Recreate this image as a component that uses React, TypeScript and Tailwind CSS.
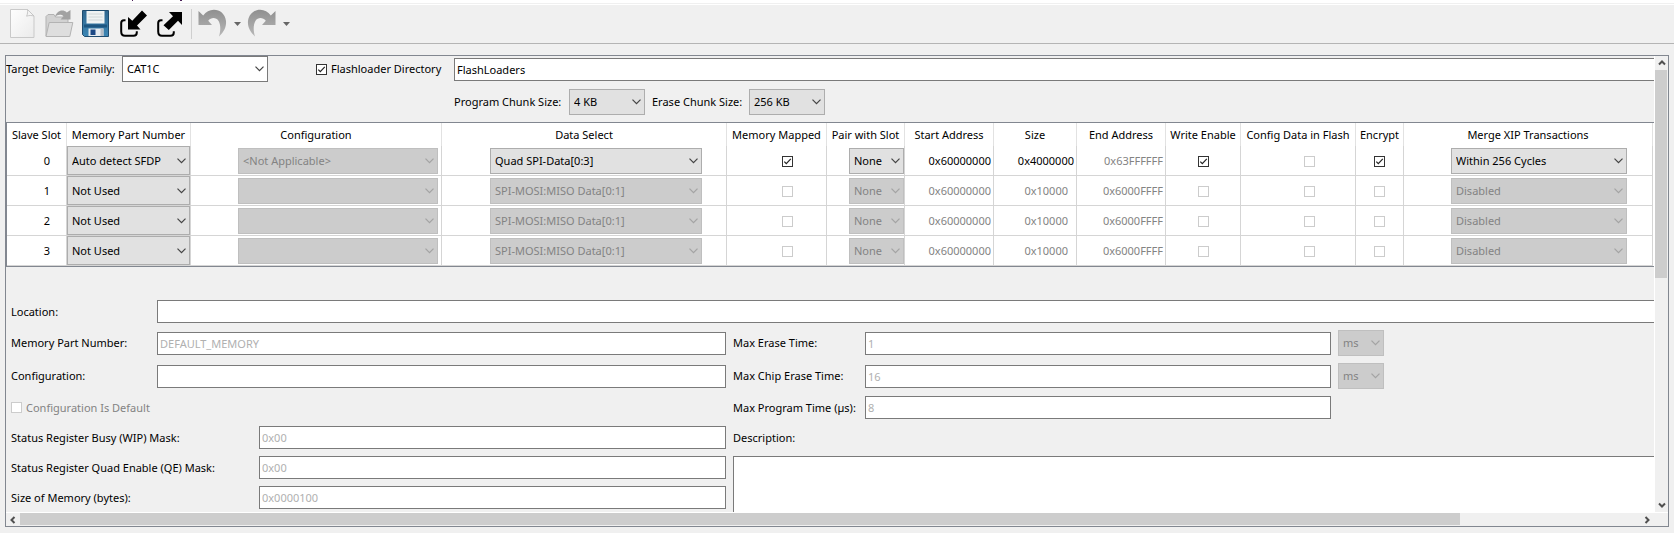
import type { ReactNode } from "react";

type SelectProps = {
  value: string;
  options?: string[];
  label?: string;
  id?: string;
  disabled?: boolean;
  tone?: "button" | "field";
  className?: string;
};

function Select({ value, options = [], label, id, disabled, tone = "button", className = "" }: SelectProps) {
  const look = disabled
    ? "border-[#bfbfbf] bg-[#cccccc] text-[#838383]"
    : tone === "field"
      ? "border-[#7a7a7a] bg-white text-black"
      : "border-[#adadad] bg-[#e1e1e1] text-black";
  return (
    <span className={`relative block ${className}`}>
      <select
        id={id}
        aria-label={label}
        disabled={disabled}
        defaultValue={value}
        className={`block h-full w-full appearance-none border pl-1 pr-4 opacity-100 outline-none ${look}`}
      >
        {[value, ...options].map((o) => (
          <option key={o}>{o}</option>
        ))}
      </select>
      <svg
        viewBox="0 0 9 6"
        className={`pointer-events-none absolute inset-y-0 right-1 my-auto h-[6px] w-[9px] ${disabled ? "text-[#a3a3a3]" : "text-[#444]"}`}
        fill="none"
        stroke="currentColor"
        strokeWidth="1.2"
      >
        <path d="M0.5 0.7 4.5 4.7 8.5 0.7" />
      </svg>
    </span>
  );
}

function Check({ on, disabled, label, id }: { on?: boolean; disabled?: boolean; label?: string; id?: string }) {
  return (
    <span className="relative inline-block size-[11px] shrink-0 align-middle">
      <input
        type="checkbox"
        id={id}
        aria-label={label}
        disabled={disabled}
        defaultChecked={on}
        className={`peer block size-full appearance-none border bg-white ${disabled ? "border-[#cccccc]" : "border-[#333]"}`}
      />
      <svg
        viewBox="0 0 11 11"
        className="pointer-events-none absolute inset-0 hidden size-full peer-checked:block"
        fill="none"
        stroke="#222"
        strokeWidth="1.2"
      >
        <path d="M2.3 5.6 4.3 7.7 8.8 2.9" />
      </svg>
    </span>
  );
}

function Field({
  label,
  id,
  value = "",
  labelWidth,
  row = "h-[23px]",
  disabled,
  open,
  children,
}: {
  label: string;
  id: string;
  value?: string;
  labelWidth: string;
  row?: string;
  disabled?: boolean;
  open?: boolean;
  children?: ReactNode;
}) {
  return (
    <div className={`flex items-center ${row}`}>
      <label htmlFor={id} className={`shrink-0 ${labelWidth}`}>
        {label}
      </label>
      <input
        id={id}
        type="text"
        disabled={disabled}
        defaultValue={value}
        className={`h-[23px] min-w-0 flex-1 border border-[#7a7a7a] bg-white px-[2px] outline-none disabled:text-[#b0b0b0] ${open ? "border-r-0" : ""}`}
      />
      {children}
    </div>
  );
}

const columns = [
  { title: "Slave Slot", width: "w-[60px]" },
  { title: "Memory Part Number", width: "w-[124px]" },
  { title: "Configuration", width: "w-[251px]" },
  { title: "Data Select", width: "w-[285px]" },
  { title: "Memory Mapped", width: "w-[100px]" },
  { title: "Pair with Slot", width: "w-[78px]" },
  { title: "Start Address", width: "w-[89px]" },
  { title: "Size", width: "w-[83px]" },
  { title: "End Address", width: "w-[89px]" },
  { title: "Write Enable", width: "w-[75px]" },
  { title: "Config Data in Flash", width: "w-[115px]" },
  { title: "Encrypt", width: "w-[48px]" },
  { title: "Merge XIP Transactions", width: "w-auto" },
];

const unused = {
  part: "Not Used",
  config: "",
  data: "SPI-MOSI:MISO Data[0:1]",
  start: "0x60000000",
  size: "0x10000",
  end: "0x6000FFFF",
  merge: "Disabled",
  used: false,
};

const slots = [
  {
    part: "Auto detect SFDP",
    config: "<Not Applicable>",
    data: "Quad SPI-Data[0:3]",
    start: "0x60000000",
    size: "0x4000000",
    end: "0x63FFFFFF",
    merge: "Within 256 Cycles",
    used: true,
  },
  unused,
  unused,
  unused,
];

function Cell({ children, className = "" }: { children?: ReactNode; className?: string }) {
  return <td className={`h-[30px] border-b border-r border-[#d5d5d5] p-0 ${className}`}>{children}</td>;
}

function SlotTable() {
  return (
    <div className="border-y border-l border-[#828790] bg-white pr-px">
      <table className="w-full table-fixed border-separate border-spacing-0">
        <thead>
          <tr>
            {columns.map((c) => (
              <th
                key={c.title}
                scope="col"
                className={`h-[23px] overflow-hidden whitespace-nowrap border-r border-[#e2e2e2] p-0 font-normal ${c.width}`}
              >
                {c.title}
              </th>
            ))}
          </tr>
        </thead>
        <tbody>
          {slots.map((s, i) => {
            const off = !s.used;
            const ink = off ? "text-[#838383]" : "text-black";
            return (
              <tr key={i}>
                <Cell className="pr-4 text-right">{i}</Cell>
                <Cell>
                  <Select className="h-[29px]" value={s.part} label={`Memory part number, slot ${i}`} />
                </Cell>
                <Cell>
                  <Select
                    className="ml-auto mr-[3px] h-[26px] w-[200px]"
                    disabled
                    value={s.config}
                    label={`Configuration, slot ${i}`}
                  />
                </Cell>
                <Cell>
                  <Select
                    className="ml-auto mr-6 h-[26px] w-[212px]"
                    disabled={off}
                    value={s.data}
                    label={`Data select, slot ${i}`}
                  />
                </Cell>
                <Cell className="pl-[22px] text-center">
                  <Check on={s.used} disabled={off} label={`Memory mapped, slot ${i}`} />
                </Cell>
                <Cell>
                  <Select
                    className="ml-auto h-[26px] w-[55px]"
                    disabled={off}
                    value="None"
                    label={`Pair with slot, slot ${i}`}
                  />
                </Cell>
                <Cell className={`pr-[2px] text-right ${ink}`}>{s.start}</Cell>
                <Cell className={`text-right ${off ? "pr-2" : "pr-[2px]"} ${ink}`}>{s.size}</Cell>
                <Cell className="pr-[2px] text-right text-[#838383]">{s.end}</Cell>
                <Cell className="text-center">
                  <Check on={s.used} disabled={off} label={`Write enable, slot ${i}`} />
                </Cell>
                <Cell className="pl-[22px] text-center">
                  <Check disabled label={`Config data in flash, slot ${i}`} />
                </Cell>
                <Cell className="text-center">
                  <Check on={s.used} disabled={off} label={`Encrypt, slot ${i}`} />
                </Cell>
                <Cell className="pl-[22px]">
                  <Select
                    className="mx-auto h-[26px] w-[176px]"
                    disabled={off}
                    value={s.merge}
                    label={`Merge XIP transactions, slot ${i}`}
                  />
                </Cell>
              </tr>
            );
          })}
        </tbody>
      </table>
    </div>
  );
}

function Tool({ label, disabled, children }: { label: string; disabled?: boolean; children: ReactNode }) {
  return (
    <button type="button" aria-label={label} disabled={disabled} className="size-[30px] shrink-0">
      <svg viewBox="0 0 30 30" className="size-full">
        {children}
      </svg>
    </button>
  );
}

function DropArrow({ label }: { label: string }) {
  return (
    <button type="button" aria-label={label} className="flex h-[30px] w-[7px] items-center justify-center">
      <svg viewBox="0 0 7 4" className="h-1 w-[7px]" fill="#666">
        <path d="M0 0H7L3.5 4Z" />
      </svg>
    </button>
  );
}

const undoShape =
  "M0.5 2 V16 H14 L10.2 11.8 C13 8.3 18 8 20.6 12 C23 16.5 22.6 22.5 21 27.5 C26 23 28.6 17.5 28 12 C27 4.5 21.5 0.7 15.8 0.8 C11.5 0.9 8 3 5.2 6.4 Z";

function Toolbar() {
  return (
    <div role="toolbar" className="flex h-[39px] shrink-0 items-start border-b border-[#b4b4b4] pl-2 pt-1">
      <div className="flex gap-[7px]">
        <Tool label="New" disabled>
          <defs>
            <linearGradient id="paper" x1="0" y1="0" x2="1" y2="1">
              <stop offset="0" stopColor="#fefefe" />
              <stop offset="1" stopColor="#ebebeb" />
            </linearGradient>
            <linearGradient id="grey" x1="0" y1="0" x2="0" y2="1">
              <stop offset="0" stopColor="#8f8f8f" />
              <stop offset="1" stopColor="#b8b8b8" />
            </linearGradient>
            <linearGradient id="disk" x1="0" y1="0" x2="0" y2="1">
              <stop offset="0" stopColor="#2f668f" />
              <stop offset="1" stopColor="#3c86b4" />
            </linearGradient>
          </defs>
          <path d="M2.5 0.5H19.5L26 7V28.5H2.5Z" fill="url(#paper)" stroke="#c9c9c9" />
          <path d="M19.5 0.5C19.8 3 19.6 5 18.6 7.2C21 6.3 23.5 6.3 26 7Z" fill="#f4f4f4" stroke="#c2c2c2" strokeWidth="0.9" />
        </Tool>
        <Tool label="Open" disabled>
          <path d="M1 27V7.5L3 5.5H9L10.5 8H23V14" fill="#d2d2d2" stroke="#b3b3b3" />
          <path d="M10 8C11.5 2 17.5 -0.5 21.8 3.5L25.5 1V10.5H15.5L18.5 7.2C16.5 5.2 12.5 5.2 10 8Z" fill="#a2a2a2" />
          <path d="M1 27.5 4.2 13.5H27.8L24.8 27.5Z" fill="#dedede" stroke="#b3b3b3" />
        </Tool>
        <Tool label="Save">
          <path d="M0.5 1.5H26.5V27.5H2.5L0.5 25.5Z" fill="url(#disk)" stroke="#1f4c70" />
          <path d="M4.5 2H22.5V14.5H4.5Z" fill="#eff2f3" />
          <path d="M6.5 5H20.5M6.5 8H20.5M6.5 11H20.5" stroke="#cdd3d6" strokeWidth="0.9" />
          <path d="M2 15.5H25V18.5H2Z" fill="#1d5580" />
          <path d="M6.5 19.5H21.5V27H6.5Z" fill="#e7ecf1" />
          <path d="M8.5 20.5H13.5V26H8.5Z" fill="#1d4a86" />
          <path d="M18.5 19.5H21.5V27H18.5Z" fill="#b4bcc6" />
        </Tool>
        <Tool label="Import">
          <path d="M6.5 11.2H5Q2.2 11.2 2.2 14V22.5Q2.2 26.8 6 26.8H14.5Q17.8 26.8 17.8 23.5V22.2" fill="none" stroke="#000" strokeWidth="2" />
          <path d="M9 8 13.3 11.7 23 1.5 28 6.5 18 16.5 21.5 20.5H9Z" />
        </Tool>
        <Tool label="Export">
          <path d="M6.5 11.2H5Q2.2 11.2 2.2 14V22.5Q2.2 26.8 6 26.8H14.5Q17.8 26.8 17.8 23.5V22.2" fill="none" stroke="#000" strokeWidth="2" />
          <path d="M26 3V16L22 11.8 12.8 21 7.5 16.2 17 7.2 13 3Z" />
        </Tool>
      </div>
      <span className="ml-[5px] mr-[6px] h-[30px] w-px bg-[#cfcfcf]" />
      <Tool label="Undo" disabled>
        <path d={undoShape} fill="url(#grey)" />
      </Tool>
      <div className="ml-[6px] mr-[6px]">
        <DropArrow label="Undo history" />
      </div>
      <Tool label="Redo" disabled>
        <g transform="translate(29 0) scale(-1 1)">
          <path d={undoShape} fill="url(#grey)" />
        </g>
      </Tool>
      <div className="ml-[6px]">
        <DropArrow label="Redo history" />
      </div>
    </div>
  );
}

function ScrollArrow({ d }: { d: string }) {
  return (
    <span className="flex size-[14px] shrink-0 items-center justify-center">
      <svg viewBox="0 0 8 8" className="size-2" fill="none" stroke="#505050" strokeWidth="2">
        <path d={d} />
      </svg>
    </span>
  );
}

export default function App() {
  return (
    <div className="flex h-screen flex-col overflow-hidden bg-[#f0f0f0] font-['Noto_Sans','Open_Sans',sans-serif] text-[11px] leading-4 text-black">
      <div className="h-[5px] shrink-0 bg-white">
        <div className="h-1 border-b border-[#f0f0f0]">
          <svg viewBox="0 0 200 3" className="block h-[3px] w-[200px]">
            <path d="M132 0H133V1H132Z M180 0H182V1H180Z" fill="#4a2058" />
          </svg>
        </div>
      </div>
      <Toolbar />

      <main className="mx-[5px] mb-[6px] mt-[11px] flex min-h-0 flex-1 flex-col border border-[#828790]">
        <div className="flex min-h-0 flex-1">
          <div className="flex min-w-0 flex-1 flex-col overflow-hidden">
            <div className="flex h-[26px] shrink-0 items-center">
              <label htmlFor="family" className="w-[116px] shrink-0">
                Target Device Family:
              </label>
              <Select id="family" tone="field" className="h-[26px] w-[146px]" value="CAT1C" options={["CAT1A", "CAT1B"]} />
              <div className="ml-12 flex w-[138px] shrink-0 items-center gap-1">
                <Check id="loader" on />
                <label htmlFor="loader">Flashloader Directory</label>
              </div>
              <input
                type="text"
                aria-label="Flashloader directory path"
                defaultValue="FlashLoaders"
                className="h-[23px] min-w-0 flex-1 border border-r-0 border-[#7a7a7a] bg-white px-[2px] outline-none"
              />
            </div>

            <div className="my-[7px] flex shrink-0 items-center pl-[448px]">
              <label htmlFor="program" className="w-[115px] shrink-0">
                Program Chunk Size:
              </label>
              <Select id="program" className="h-[26px] w-[76px]" value="4 KB" />
              <label htmlFor="erase" className="ml-[7px] w-[97px] shrink-0">
                Erase Chunk Size:
              </label>
              <Select id="erase" className="h-[26px] w-[76px]" value="256 KB" />
            </div>

            <SlotTable />

            <div className="mt-[33px] flex min-h-0 flex-1 flex-col gap-[7px] pl-[5px]">
              <Field id="location" label="Location:" labelWidth="w-[146px]" open />
              <div className="grid min-h-0 flex-1 grid-cols-[715fr_921fr] gap-[7px]">
                <div className="flex flex-col gap-[7px]">
                  <Field id="part" label="Memory Part Number:" labelWidth="w-[146px]" row="h-[26px]" value="DEFAULT_MEMORY" disabled />
                  <Field id="config" label="Configuration:" labelWidth="w-[146px]" row="h-[26px]" />
                  <div className="flex h-[23px] items-center gap-1 text-[#838383]">
                    <Check id="isdefault" disabled />
                    <label htmlFor="isdefault">Configuration Is Default</label>
                  </div>
                  <Field id="wip" label="Status Register Busy (WIP) Mask:" labelWidth="w-[248px]" value="0x00" disabled />
                  <Field id="qe" label="Status Register Quad Enable (QE) Mask:" labelWidth="w-[248px]" value="0x00" disabled />
                  <Field id="memsize" label="Size of Memory (bytes):" labelWidth="w-[248px]" value="0x0000100" disabled />
                </div>
                <div className="flex min-h-0 flex-col gap-[7px]">
                  <Field id="erasetime" label="Max Erase Time:" labelWidth="w-[132px]" row="h-[26px] pr-[270px]" value="1" disabled>
                    <Select className="ml-[7px] h-[26px] w-[46px]" disabled value="ms" label="Erase time unit" />
                  </Field>
                  <Field id="chiptime" label="Max Chip Erase Time:" labelWidth="w-[132px]" row="h-[26px] pr-[270px]" value="16" disabled>
                    <Select className="ml-[7px] h-[26px] w-[46px]" disabled value="ms" label="Chip erase time unit" />
                  </Field>
                  <Field id="progtime" label="Max Program Time (µs):" labelWidth="w-[132px]" row="h-[23px] pr-[323px]" value="8" disabled />
                  <label htmlFor="description" className="flex h-[23px] items-center">
                    Description:
                  </label>
                  <textarea
                    id="description"
                    className="block min-h-0 w-full flex-1 resize-none border-l border-t border-[#7a7a7a] bg-white p-1 outline-none"
                  />
                </div>
              </div>
            </div>
          </div>

          <div aria-hidden="true" className="flex w-[14px] shrink-0 flex-col border-l border-white">
            <ScrollArrow d="M1 5.5 4 2.5 7 5.5" />
            <span className="mr-px flex-[208] bg-[#cdcdcd]" />
            <span className="flex-[220]" />
            <ScrollArrow d="M1 2.5 4 5.5 7 2.5" />
          </div>
        </div>

        <div aria-hidden="true" className="flex h-[14px] shrink-0 border-t border-white pr-[14px]">
          <ScrollArrow d="M5.5 1 2.5 4 5.5 7" />
          <span className="mb-px flex-[1440] bg-[#cdcdcd]" />
          <span className="flex-[180]" />
          <ScrollArrow d="M2.5 1 5.5 4 2.5 7" />
        </div>
      </main>
    </div>
  );
}
